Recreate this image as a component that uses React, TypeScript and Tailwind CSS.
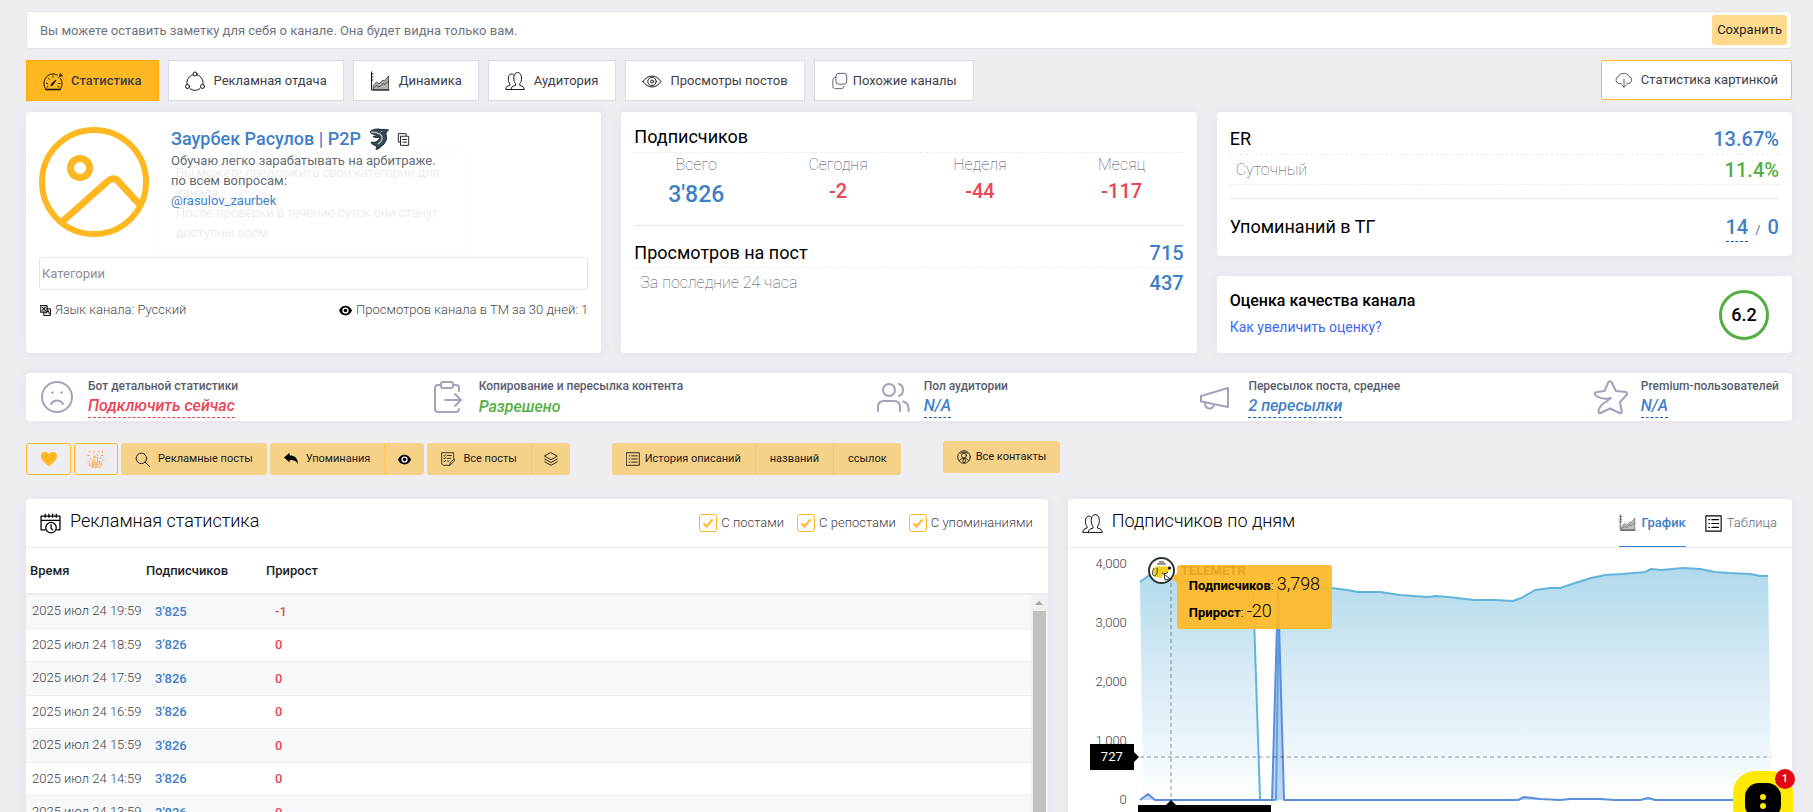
import React from "react";

const Svg = ({
  size = 20,
  sw = 1,
  className = "",
  children,
}: {
  size?: number;
  sw?: number;
  className?: string;
  children: React.ReactNode;
}) => (
  <svg
    width={size}
    height={size}
    viewBox="0 0 20 20"
    fill="none"
    stroke="currentColor"
    strokeWidth={sw}
    strokeLinecap="round"
    strokeLinejoin="round"
    className={`shrink-0 ${className}`}
    aria-hidden="true"
  >
    {children}
  </svg>
);

const GaugeIcon = () => (
  <Svg size={20} sw={0.9}>
    <path d="M3 18.5h14" strokeWidth="1.400" />
    <path d="M3 18.500C1.500 16.500 1 14.500 1 12.500 1 7 5 3 10 3c1.500 0 3 .3 4.500 1.200M17.500 7.500c1 1.500 1.500 3 1.500 5 0 2.500-.5 4-2 6M3.500 12.500h1M15.500 12.500h1.500M5.500 7.500l.8.8M10 5v1M4 16l1-.6M16 16l-1-.6M17 2.500v2.500h2.500M15.500 6.500l3.500-3.500" />
    <path d="M8 14.500l1-2 4-3.500-3 4.500z" fill="currentColor" />
  </Svg>
);

const CycleIcon = () => (
  <Svg size={20} sw={0.9}>
    <circle cx="10" cy="3" r="2" />
    <circle cx="2.500" cy="15.500" r="2" />
    <circle cx="17.500" cy="15.500" r="2" />
    <path d="M7.500 4C4 5 1.500 8.500 2 13M12.500 4c3.500 1 6 4.500 5.500 9M5 17.500c1.500 1.200 3 1.800 5 1.800s3.500-.6 5-1.800" />
  </Svg>
);

const AreaIcon = ({ size = 20 }: { size?: number }) => (
  <Svg size={size} sw={0.9}>
    <path d="M1.500 1v18h17.500M1.500 3h1.500M1.500 6h1.500M1.500 9h1.500" />
    <path d="M3.500 14l3-3 2.500 2 4-4 1.500 1 4-5v14h-15z" fill="currentColor" fillOpacity=".3" strokeWidth=".6" />
    <path d="M3.500 17l3-2.500 2.500 1.500 4-3.500 2 1 3.500-3.500" strokeWidth=".6" />
  </Svg>
);

const PeopleIcon = ({ size = 20 }: { size?: number }) => (
  <Svg size={size} sw={0.9}>
    <path d="M7.500 18.500h11.800c-.3-2.600-1.200-3.200-4.500-4.100v-1.800c1.300-1.300 1.700-3 1.700-5.600 0-3-1.300-5.500-3.900-5.500S8.800 4 8.800 7c0 2.600.4 4.300 1.700 5.600v1.800c-3.300.9-4.200 1.500-4.500 4.100zM6 18.500H.8c.2-2.600 1-3.200 4-4.200v-1.500C3.600 11.500 3.300 10 3.300 8c0-3 1-5 3.200-5 .8 0 1.500.2 2 .8" />
  </Svg>
);

const EyeIcon = () => (
  <Svg size={20} sw={0.9}>
    <path d="M1 10.500C3.500 7 6.500 5 10 5s6.500 2 9 5.500c-2.500 3.500-5.500 5.500-9 5.500s-6.500-2-9-5.500z" />
    <circle cx="10" cy="10.500" r="4.200" />
    <circle cx="10" cy="10.500" r="1.500" />
  </Svg>
);

const LayersSquareIcon = () => (
  <Svg size={18} className="text-gray-600">
    <rect x="5.500" y="1.500" width="12" height="12" rx="3" />
    <path d="M5 6c-2 .2-3 1.300-3 3.300v6.200c0 2 1 3 3 3h6c2 0 3.200-.8 3.300-2.500" />
  </Svg>
);

const CloudIcon = () => (
  <Svg size={18} sw={0.9}>
    <path d="M7 14H5a4 4 0 0 1-.8-7.900A4 4 0 0 1 9 3a5 5 0 0 1 6.500 3A4.100 4.100 0 0 1 15 14h-2M10 9v9M7.500 15.500L10 18l2.500-2.500" />
  </Svg>
);

const CopyIcon = () => (
  <Svg size={13} sw={1.500}>
    <path d="M5 14H2V1h12v3" />
    <path d="M6 5h12v14H6zM9 10h6M9 14h6" />
  </Svg>
);

const LangIcon = () => (
  <Svg size={11} sw={1.800}>
    <path d="M1 1h12v12H1z" fill="currentColor" fillOpacity=".25" />
    <path d="M7 13v6h12V7h-6M4 4l6 6M10 4l-6 6M11 15l4-5 2 6" />
  </Svg>
);

const EyeSolidIcon = () => (
  <svg width="13" height="13" viewBox="0 0 20 20" className="shrink-0" aria-hidden="true">
    <path d="M0 10c2-5 6-7.500 10-7.500S18 5 20 10c-2 5-6 7.500-10 7.500S2 15 0 10z" />
    <circle cx="10" cy="10" r="4.800" fill="#fff" />
    <circle cx="10" cy="10" r="2.800" />
  </svg>
);

const SearchIcon = () => (
  <Svg size={15} sw={1.300}>
    <circle cx="8.500" cy="8.500" r="7" />
    <path d="M13.500 13.500l6 6" />
  </Svg>
);

const ReplyIcon = () => (
  <svg width="14" height="14" viewBox="0 0 20 20" className="shrink-0" aria-hidden="true">
    <path d="M0 8l8-7v4c7 0 12 3 12 13-2-5-5-6.500-12-6.500V15z" />
  </svg>
);

const PostsIcon = () => (
  <Svg size={14} sw={1.200}>
    <path d="M18 9V1H1v16l2 2h9M4 5l1 1 1.500-2M9 5h6M4 9l1 1 1.500-2M9 9h5M4 13l1 1 1.500-2M9 13h2M12.500 18.500l1-4L19 10l.5 2-4.500 5z" />
  </Svg>
);

const StackIcon = () => (
  <Svg size={14} sw={1.300}>
    <path d="M10 1l9 5-9 5-9-5zM1 10l9 5 9-5M1 14l9 5 9-5" />
  </Svg>
);

const ListIcon = ({ size = 14 }: { size?: number }) => (
  <Svg size={size} sw={1.300}>
    <path d="M1 1h18v18H1zM4.500 5.500h1M8 5.500h8M4.500 10h1M8 10h8M4.500 14.500h1M8 14.500h8" />
  </Svg>
);

const ContactIcon = () => (
  <Svg size={14} sw={1.300}>
    <circle cx="10" cy="10" r="9" />
    <circle cx="10" cy="8" r="3.500" />
    <path d="M3 15c1.500-2 4-3 7-3s5.500 1 7 3M5 4.500c3-2 7-2 10 0M10 12l-2 4 2 2.500 2-2.500z" />
  </Svg>
);

const QrIcon = () => (
  <Svg size={18} sw={1.200} className="text-[#fcae62]">
    <path d="M2 2h3M8 1v3M12 2h2M17 1v3M1 6h3M7 7h2M11 5l2 2M16 6h3M3 10h3M14 9h3M1 13h2M17 12h2M2 17h4M3 15v3M7 16v3M10 18h3M15 17h3M16 14v2" strokeDasharray="2 1" />
    <path d="M8 10a2 2 0 1 1 4 0v4H8zM6 12v4h8v-4M5 19h10" />
  </Svg>
);

const CalendarIcon = () => (
  <Svg size={21} sw={1.200}>
    <path d="M5 16H1V3h18v13h-3M1 7h18M5 1v3M8.500 1v3M12 1v3M15.500 1v3" />
    <circle cx="10.500" cy="14" r="5" />
    <path d="M10.500 11v3.500l1.500 1.500" />
  </Svg>
);

const SadIcon = () => (
  <svg width="36" height="36" viewBox="0 0 36 36" fill="none" stroke="currentColor" strokeWidth="2" strokeLinecap="round" aria-hidden="true">
    <circle cx="18" cy="18" r="15" />
    <path d="M12 25c1.500-2.500 3.500-3.500 6-3.500s4.500 1 6 3.500" />
    <path d="M13.500 12.500v2M22.500 12.500v2M12.500 13.500h2M21.500 13.500h2" strokeWidth="1" />
  </svg>
);

const ForwardIcon = () => (
  <svg width="36" height="36" viewBox="0 0 36 36" fill="none" stroke="currentColor" strokeWidth="2" strokeLinecap="round" strokeLinejoin="round" aria-hidden="true">
    <path d="M11 6H8a3 3 0 0 0-3 3v21a3 3 0 0 0 3 3h18a3 3 0 0 0 3-3M23 6h3a3 3 0 0 1 3 3v3" />
    <rect x="11" y="3" width="12" height="6" rx="2" />
    <path d="M15 21h15M25 15l6 6-6 6" />
  </svg>
);

const UsersIcon = () => (
  <svg width="36" height="36" viewBox="0 0 36 36" fill="none" stroke="currentColor" strokeWidth="2" strokeLinecap="round" aria-hidden="true">
    <circle cx="14" cy="11" r="6" />
    <path d="M3 32v-4c0-4 2-6 6-6h10c4 0 6 2 6 6v4M24 5c2.500.8 4 3 4 6s-1.500 5.200-4 6M28 22.500c3.500.8 5.500 3 5.500 6.500v3" />
  </svg>
);

const HornIcon = () => (
  <svg width="36" height="36" viewBox="0 0 36 36" fill="none" stroke="currentColor" strokeWidth="2" strokeLinejoin="round" aria-hidden="true">
    <path d="M2 17l27-8v19L2 22.500z" />
    <path d="M6 23.500c0 4 1.500 6 4.500 6s4-1.500 4.500-4" />
  </svg>
);

const StarIcon = () => (
  <svg width="36" height="36" viewBox="0 0 36 36" fill="none" stroke="currentColor" strokeWidth="2" strokeLinecap="round" strokeLinejoin="round" aria-hidden="true">
    <path d="M16.500 3c.5-1 2.500-1 3 0l4.500 9 9.500 1c1.500.2 2 1.800 1 3l-6.500 7 1.700 9.500c.2 1.500-1 2-2 1.500L18 29.500 8.500 34c-1.200.5-2.200-.4-2-1.500.5-4 2-6 5-8 2.500-1.700 5-3.500 7.500-5.500-5 1.300-9.500 1.300-14-1.500-1.500-1-2.500-2.500-2-3.500.3-.8 1-1 2-1l7.500-1z" />
  </svg>
);

const SharkIcon = () => (
  <svg width="20" height="22" viewBox="0 0 20 22" aria-hidden="true">
    <path
      d="M1 4C3 1 8 .5 12 1.500c2 0 5-.5 7.500.5-1.500 1-2.500 2.500-2.500 4.500 1.500 5-.5 9-4.500 11.500-1 1.500-3 3-5.500 3.500.5-1.500.5-2.500 0-4C4.500 17.500 2.500 16 2 14c2 .5 4 .5 5.500-.5 2-1 3.500-3 3-4.500C8 10 5.500 9.500 4 8.500c2-.5 3-.5 4-1.500C5.500 6.500 2.500 6 1 4z"
      fill="#37474f"
      stroke="#20292d"
    />
    <path d="M2 4c4 0 7 .5 10 3 2.500 3 1 6.500-3 9" stroke="#aebcc2" strokeWidth="1.500" fill="none" />
    <path d="M12 3.500h1" stroke="#fff" />
  </svg>
);

const tabs = [
  { label: "Статистика", icon: <GaugeIcon /> },
  { label: "Рекламная отдача", icon: <CycleIcon /> },
  { label: "Динамика", icon: <AreaIcon /> },
  { label: "Аудитория", icon: <PeopleIcon /> },
  { label: "Просмотры постов", icon: <EyeIcon /> },
  { label: "Похожие каналы", icon: <LayersSquareIcon /> },
];

const subscribers = [
  { label: "Всего", value: "3'826", style: "text-[23px] text-[#3f7fc8] mt-1" },
  { label: "Сегодня", value: "-2", style: "text-xl text-[#ea4655]" },
  { label: "Неделя", value: "-44", style: "text-xl text-[#ea4655]" },
  { label: "Месяц", value: "-117", style: "text-xl text-[#ea4655]" },
];

const facts = [
  { label: "Бот детальной статистики", value: "Подключить сейчас", icon: <SadIcon />, link: true, color: "text-[#ea4655] border-[#ea4655]" },
  { label: "Копирование и пересылка контента", value: "Разрешено", icon: <ForwardIcon />, link: false, color: "text-[#56ad42]" },
  { label: "Пол аудитории", value: "N/A", icon: <UsersIcon />, link: true, color: "text-[#3f7fc8] border-[#1c5ea8]" },
  { label: "Пересылок поста, среднее", value: "2 пересылки", icon: <HornIcon />, link: true, color: "text-[#3f7fc8] border-[#1c5ea8]" },
  { label: "Premium-пользователей", value: "N/A", icon: <StarIcon />, link: true, color: "text-[#3f7fc8] border-[#1c5ea8]" },
];

const rows = [
  ["2025 июл 24 19:59", "3'825", "-1"],
  ["2025 июл 24 18:59", "3'826", "0"],
  ["2025 июл 24 17:59", "3'826", "0"],
  ["2025 июл 24 16:59", "3'826", "0"],
  ["2025 июл 24 15:59", "3'826", "0"],
  ["2025 июл 24 14:59", "3'826", "0"],
  ["2025 июл 24 13:59", "3'826", "0"],
];

const card = "bg-white rounded shadow-[0_0_13px_rgba(82,63,105,0.06)]";
const action = "flex h-8 items-center bg-[#f6d289] text-[11px] text-[#1b1b1b] whitespace-nowrap";

const NoteBar = () => (
  <form className="flex items-center rounded-sm border border-[#e2e5ec] bg-white pr-1">
    <input
      aria-label="Заметка о канале"
      placeholder="Вы можете оставить заметку для себя о канале. Она будет видна только вам."
      className="h-9 grow bg-transparent px-[13px] text-[13px] outline-none placeholder:text-[#6f7480]"
    />
    <button type="button" className="h-[30px] rounded-[3px] bg-[#ffd98c] px-[5px] text-[13px] text-[#212529]">
      Сохранить
    </button>
  </form>
);

const Tabs = () => (
  <nav className="mt-[11px] flex items-start gap-[9px] text-[13px] text-[#3f4047]">
    {tabs.map((tab, i) => (
      <button
        key={tab.label}
        type="button"
        className={`flex h-[41px] items-center border px-4 ${
          i === 0 ? "border-[#ffa800] bg-[#ffb822] font-medium" : "border-[#d9d9ec] bg-white"
        } ${i === 5 ? "gap-1" : i === 0 ? "gap-2" : "gap-[9px]"}`}
      >
        <span className="text-black">{tab.icon}</span>
        {tab.label}
      </button>
    ))}
    <button
      type="button"
      className="ml-auto flex h-10 items-center gap-2 rounded-[3px] border border-[#ffb822] bg-white px-[13px]"
    >
      <CloudIcon />
      Статистика картинкой
    </button>
  </nav>
);

const ChannelCard = () => (
  <section className={`${card} relative px-[13px] pt-[15px]`}>
    <div className="flex h-[130px] gap-[22px]">
      <svg width="110" height="110" viewBox="0 0 110 110" fill="none" stroke="#ffb822" strokeWidth="6" className="shrink-0" aria-hidden="true">
        <circle cx="55" cy="55" r="52" />
        <circle cx="41" cy="41" r="9.500" strokeWidth="7" />
        <path d="M24 94l45-40c4-3.500 8-3 11 1l21 23" strokeWidth="7" />
      </svg>
      <div>
        <h1 className="flex items-center gap-2 text-lg leading-6 font-medium text-[#3f7fc8]">
          <a href="#channel">Заурбек Расулов | P2P</a>
          <SharkIcon />
          <button type="button" aria-label="Копировать" className="text-[#222]">
            <CopyIcon />
          </button>
        </h1>
        <p className="text-[13px] leading-5 text-[#646c72]">
          Обучаю легко зарабатывать на арбитраже.
          <br />
          по всем вопросам:
          <br />
          <a href="#rasulov" className="text-[#3f7fc8]">
            @rasulov_zaurbek
          </a>
        </p>
      </div>
    </div>
    <input
      aria-label="Категории"
      placeholder="Категории"
      className="h-[33px] w-full rounded-[3px] border border-[#e2e5ec] px-[2px] text-[13px] outline-none placeholder:text-[#8f8f97]"
    />
    <div className="mt-[10px] flex justify-between text-[13px] leading-5 font-light text-[#464a50]">
      <span className="flex items-center gap-1">
        <span className="pl-px text-black"><LangIcon /></span>
        Язык канала: Русский
      </span>
      <span className="flex items-center gap-1">
        <EyeSolidIcon />
        Просмотров канала в ТМ за 30 дней: 1
      </span>
    </div>
    <div className="pointer-events-none absolute top-[41px] left-[134px] w-[304px] rounded px-4 py-[10px] text-[13px] leading-5 font-light text-[#e6e6e8] shadow-[0_0_15px_rgba(0,0,0,0.02)]">
      Вы можете предложить свои категории для канала.
      <br />
      После проверки в течение суток они станут доступны всем.
    </div>
  </section>
);

const SubscribersCard = () => (
  <section className={`${card} px-[13px] pt-[13px]`}>
    <h2 className="border-b border-dashed border-[#ebedf2] pb-[3px] text-lg leading-6 text-black">Подписчиков</h2>
    <div className="-mx-[9px] grid grid-cols-4 text-center">
      {subscribers.map((item) => (
        <div key={item.label}>
          <div className="text-base leading-6 font-thin text-[#48465b]">{item.label}</div>
          <div className={`leading-7 font-medium ${item.style}`}>{item.value}</div>
        </div>
      ))}
    </div>
    <hr className="mt-4 border-[#e2e5ec]" />
    <div className="mt-3 flex items-center justify-between border-b border-dashed border-[#ebedf2]">
      <h2 className="text-lg leading-[29px] text-black">Просмотров на пост</h2>
      <span className="text-xl font-medium text-[#3f7fc8]">715</span>
    </div>
    <div className="flex items-center justify-between">
      <span className="pl-[6px] text-base leading-[29px] font-thin text-[#48465b]">За последние 24 часа</span>
      <span className="text-xl font-medium text-[#3f7fc8]">437</span>
    </div>
  </section>
);

const RateCards = () => (
  <div className="flex flex-col gap-5">
    <section className={`${card} grow px-[13px] pt-3`}>
      <div className="flex items-center justify-between border-b border-dashed border-[#ebedf2]">
        <h2 className="text-lg leading-[30px] text-black">ER</h2>
        <span className="text-xl font-medium text-[#3f7fc8]">13.67%</span>
      </div>
      <div className="flex items-center justify-between border-b border-dashed border-[#ebedf2]">
        <span className="pl-[6px] text-base leading-[29px] font-thin text-[#48465b]">Суточный</span>
        <span className="text-xl font-medium text-[#56ad42]">11.4%</span>
      </div>
      <hr className="mt-[13px] border-[#e2e5ec]" />
      <div className="mt-[14px] flex items-start justify-between">
        <h2 className="text-lg leading-7 text-black">Упоминаний в ТГ</h2>
        <div className="flex items-baseline gap-[7px] text-[13px] leading-7 text-[#646c9a]">
          <a href="#mentions" className="border-b border-dashed border-[#1c5ea8] text-xl leading-7 font-medium text-[#3f7fc8]">
            14
          </a>
          /<span className="text-xl leading-7 font-medium text-[#3f7fc8]">0</span>
        </div>
      </div>
    </section>
    <section className={`${card} flex h-[77px] items-center justify-between pr-[23px] pl-[13px]`}>
      <div>
        <h2 className="text-base leading-6 font-medium text-black">Оценка качества канала</h2>
        <a href="#quality" className="text-sm leading-7 text-[#3d69f0]">
          Как увеличить оценку?
        </a>
      </div>
      <div className="flex size-[50px] items-center justify-center rounded-full border-3 border-[#56ad42] text-lg font-medium text-black">
        6.2
      </div>
    </section>
  </div>
);

const Facts = () => (
  <section className={`${card} mt-5 flex h-12 items-center justify-between px-[13px]`}>
    {facts.map((fact) => (
      <div key={fact.label} className="flex items-center gap-[13px]">
        <span className="text-[#a1a3bb]">{fact.icon}</span>
        <div className="flex flex-col items-start">
          <span className="text-xs leading-[18px] font-medium text-[#595d6e]">{fact.label}</span>
          {fact.link ? (
            <a href="#fact" className={`border-b border-dashed text-base leading-[22px] font-medium italic ${fact.color}`}>
              {fact.value}
            </a>
          ) : (
            <span className={`text-base leading-[23px] font-medium italic ${fact.color}`}>{fact.value}</span>
          )}
        </div>
      </div>
    ))}
  </section>
);

const Actions = () => (
  <div className="mt-[22px] flex items-start gap-[3px]">
    <button type="button" aria-label="В избранное" className="flex h-8 w-[45px] items-center justify-center rounded-[3px] border border-[#ffb822]">
      <svg width="18" height="16" viewBox="0 0 18 16" fill="#ffb822" aria-hidden="true">
        <path d="M9 15.500C4 11 1 8.500 1 5 1 2.500 2.800 1 5 1c1.700 0 3.200.8 4 2.300C9.800 1.800 11.300 1 13 1c2.200 0 4 1.500 4 4 0 3.500-3 6-8 10.500z" />
      </svg>
    </button>
    <button type="button" aria-label="Код канала" className="flex h-8 w-11 items-center justify-center rounded-[3px] border border-[#ffb822]">
      <QrIcon />
    </button>
    <button type="button" className={`${action} gap-2 rounded-[3px] px-[14px]`}>
      <SearchIcon />
      Рекламные посты
    </button>
    <div className="flex">
      <button type="button" className={`${action} gap-2 rounded-l-[3px] px-[14px]`}>
        <ReplyIcon />
        Упоминания
      </button>
      <button type="button" aria-label="Просмотры" className={`${action} rounded-r-[3px] border-l border-[#fdc55a] px-[13px]`}>
        <EyeSolidIcon />
      </button>
    </div>
    <div className="flex">
      <button type="button" className={`${action} gap-2 rounded-l-[3px] px-[14px]`}>
        <PostsIcon />
        Все посты
      </button>
      <button type="button" aria-label="Слои" className={`${action} rounded-r-[3px] border-l border-[#fdc55a] px-3`}>
        <StackIcon />
      </button>
    </div>
    <div className="ml-[39px] flex">
      <button type="button" className={`${action} gap-[5px] rounded-l-[3px] px-[14px]`}>
        <ListIcon />
        История описаний
      </button>
      <button type="button" className={`${action} border-l border-[#fdc55a] px-[14px]`}>
        названий
      </button>
      <button type="button" className={`${action} rounded-r-[3px] border-l border-[#fdc55a] px-[14px]`}>
        ссылок
      </button>
    </div>
    <button type="button" className={`${action} -mt-[2px] ml-[39px] gap-[5px] rounded-[3px] px-[14px]`}>
      <ContactIcon />
      Все контакты
    </button>
  </div>
);

const AdStats = () => (
  <section className={`${card} col-span-7`}>
    <header className="flex h-[49px] items-center border-b border-[#ebedf2] pr-[15px] pl-[14px]">
      <CalendarIcon />
      <h2 className="ml-[9px] grow pb-1 text-lg font-light text-black">Рекламная статистика</h2>
      <div className="flex gap-[13px] text-[13px] font-light text-[#3f4047]">
        {["С постами", "С репостами", "С упоминаниями"].map((label) => (
          <label key={label} className="flex items-center gap-1">
            <span className="relative flex size-[18px]">
              <input type="checkbox" defaultChecked className="peer size-[18px] appearance-none rounded-[3px] border border-[#ffb822]" />
              <svg viewBox="0 0 18 18" fill="none" stroke="#ffb822" strokeWidth="2" className="pointer-events-none absolute inset-0 opacity-0 peer-checked:opacity-100" aria-hidden="true">
                <path d="M4.500 9.500l3 3 6-7" />
              </svg>
            </span>
            {label}
          </label>
        ))}
      </div>
    </header>
    <div className="relative">
      <table className="w-full text-left text-[13px] leading-normal">
        <thead>
          <tr className="h-[46px] border-b-2 border-[#ebedf2] text-[#212529]">
            <th className="w-[120px] pl-1 font-medium">Время</th>
            <th className="w-[120px] font-medium">Подписчиков</th>
            <th className="font-medium">Прирост</th>
          </tr>
        </thead>
        <tbody>
          {rows.map((row) => (
            <tr key={row[0]} className="border-b border-[#ebedf2] odd:bg-[#f7f8fa]">
              <td className="pt-[6px] pb-[7px] pl-[6px] font-light whitespace-nowrap text-[#3f4047]">{row[0]}</td>
              <td className="pl-[9px] font-medium text-[#3f7fc8]">{row[1]}</td>
              <td className="pl-[9px] font-medium text-[#ea4655]">{row[2]}</td>
            </tr>
          ))}
        </tbody>
      </table>
      <div className="absolute top-[47px] right-0 bottom-0 flex w-[17px] flex-col items-center bg-[#f1f1f1] pt-[6px]">
        <svg width="8" height="4" viewBox="0 0 8 4" fill="#a3a3a3" aria-hidden="true">
          <path d="M0 4l4-4 4 4z" />
        </svg>
        <div className="mt-[6px] w-[13px] grow bg-[#c1c1c1]" />
      </div>
    </div>
  </section>
);

// Chart space: 631 x 236, 4,000 at the top and 0 at the bottom
const line =
  "M0 18L8 12 20 9 32 14 60 19 113 24 120 236H136L139 24 192 24 207 26 218 28 240 28 260 31 288 33 296 32 308 33 334 36 355 36 373 37 381 34 395 26 410 24 420 24 435 19 451 14 465 11 482 10 505 8 511 5 521 6 543 4 560 5 575 8 589 9 610 10 620 12 628 12";
const area = `${line}L631 236H3Z`;

const Chart = () => (
  <div className="relative flex pt-4 pr-[21px] pb-10">
    <div className="-mt-2 flex h-[252px] w-[72px] shrink-0 flex-col justify-between pr-[13px] text-right text-[13px] leading-4 font-light text-[#3f4047]">
      <span>4,000</span>
      <span>3,000</span>
      <span>2,000</span>
      <span>1,000</span>
      <span>0</span>
    </div>
    <svg viewBox="0 0 631 236" preserveAspectRatio="none" className="h-[236px] min-w-0 grow overflow-visible" aria-label="Подписчиков по дням">
      <defs>
        <linearGradient id="fade" x1="0" y1="0" x2="0" y2="1">
          <stop offset="0" stopColor="#b1d9ec" />
          <stop offset=".25" stopColor="#c5e4f0" />
          <stop offset=".4" stopColor="#d4e9f5" />
          <stop offset=".8" stopColor="#eef7fc" />
          <stop offset="1" stopColor="#fff" />
        </linearGradient>
      </defs>
      <path d={area} fill="url(#fade)" />
      <path d={line} fill="none" stroke="#62b4da" strokeWidth="2" strokeLinejoin="round" />
      <path d="M0 236L8 230 15 236H132L138 24 144 236H378L384 233 400 235 420 236 430 235 460 235 475 236H500L508 234 515 236H631" fill="#4f86d8" fillOpacity=".35" stroke="#5b8fdc" strokeWidth="2" strokeLinejoin="round" />
      <path d="M31 5V236M0 193H631" stroke="#000" strokeOpacity=".4" strokeDasharray="4 3" />
    </svg>
    <div className="absolute top-[9px] left-[80px] size-[27px]">
      <svg viewBox="0 0 27 27" aria-hidden="true">
        <circle cx="13.500" cy="13.500" r="12.500" fill="#fff" stroke="#2d3436" strokeWidth="2" />
        <path d="M6 11c2-2 4-2 7-1 3-1 6-1 8 0 1 2 0 5-2 6h-4l-1 5-7-1-2-4z" fill="#f4cf1d" />
        <path d="M6 11c-2 3-2 7 0 8 2 0 4-3 3-8M9 7h9M11 5h5M14 16c2 1 4 1 6-1" fill="none" stroke="#2d3436" />
        <path d="M16 17l6 5-5 1z" fill="#fff" stroke="#2d3436" />
        <circle cx="21.500" cy="11" r="1.500" />
      </svg>
    </div>
    <div className="absolute top-[17px] left-[109px] rounded-[3px] bg-[#fdb92b]/95 px-3 pt-[6px] pb-1 text-[13px] leading-[25px] font-light text-black">
      <span className="absolute top-[8px] -left-[5px] size-0 border-y-5 border-r-5 border-y-transparent border-r-[#fdb92b]" />
      <span className="absolute -top-1 left-1 text-[13px] leading-5 font-bold text-[#e6a51f]">TELEMETR</span>
      <div className="relative">
        <b className="font-bold">Подписчиков</b>: <span className="text-lg leading-[25px]">3,798</span>
      </div>
      <div className="relative">
        <b className="font-bold">Прирост</b>: <span className="text-lg leading-[25px]">-20</span>
      </div>
    </div>
    <div className="absolute top-[196px] left-[22px] flex h-[26px] w-[44px] items-center justify-center bg-black text-[13px] text-white">
      727
      <span className="absolute left-full size-0 border-y-5 border-l-5 border-y-transparent border-l-black" />
    </div>
    <div className="absolute top-[257px] left-[70px] h-7 w-[133px] bg-black">
      <span className="absolute -top-[5px] left-[28px] size-0 border-x-5 border-b-5 border-x-transparent border-b-black" />
    </div>
  </div>
);

const DailySubscribers = () => (
  <section className={`${card} col-span-5`}>
    <header className="flex h-[49px] items-center border-b border-[#ebedf2] pr-[15px] pl-[14px]">
      <PeopleIcon size={21} />
      <h2 className="ml-[9px] grow pb-1 text-lg font-light text-black">Подписчиков по дням</h2>
      <div className="flex h-[48px] gap-[19px] text-[13px]">
        <button type="button" className="flex items-center gap-[5px] border-b border-[#3f7fc8] font-medium text-[#3f7fc8]">
          <span className="text-[#333]"><AreaIcon size={17} /></span>
          График
        </button>
        <button type="button" className="flex items-center gap-[5px] font-light text-[#646c7a]">
          <span className="text-black"><ListIcon size={17} /></span>
          Таблица
        </button>
      </div>
    </header>
    <Chart />
  </section>
);

const ChatButton = () => (
  <button type="button" aria-label="Чат" className="fixed right-5 -bottom-[19px] flex size-[60px] justify-center rounded-[22px] bg-[#ffe900] pt-3">
    <span className="flex size-9 flex-col items-center justify-center gap-[3px] rounded-[14px] bg-black">
      <span className="size-[6px] rounded-full bg-[#ffe900]" />
      <span className="size-[6px] rounded-full bg-[#ffe900]" />
    </span>
    <span className="absolute -top-[2px] -right-[2px] flex size-5 items-center justify-center rounded-full bg-[#e30613] text-[11px] font-bold text-white">
      1
    </span>
  </button>
);

const App = () => (
  <div className="h-screen overflow-hidden bg-[#eeedf2] pt-[11px] pr-[21px] pl-[26px] font-['Roboto',sans-serif]">
    <NoteBar />
    <Tabs />
    <main>
      <div className="mt-[11px] grid min-h-[241px] grid-cols-3 gap-5">
        <ChannelCard />
        <SubscribersCard />
        <RateCards />
      </div>
      <Facts />
      <Actions />
      <div className="mt-6 grid grid-cols-12 items-start gap-5">
        <AdStats />
        <DailySubscribers />
      </div>
    </main>
    <ChatButton />
  </div>
);

export default App;
